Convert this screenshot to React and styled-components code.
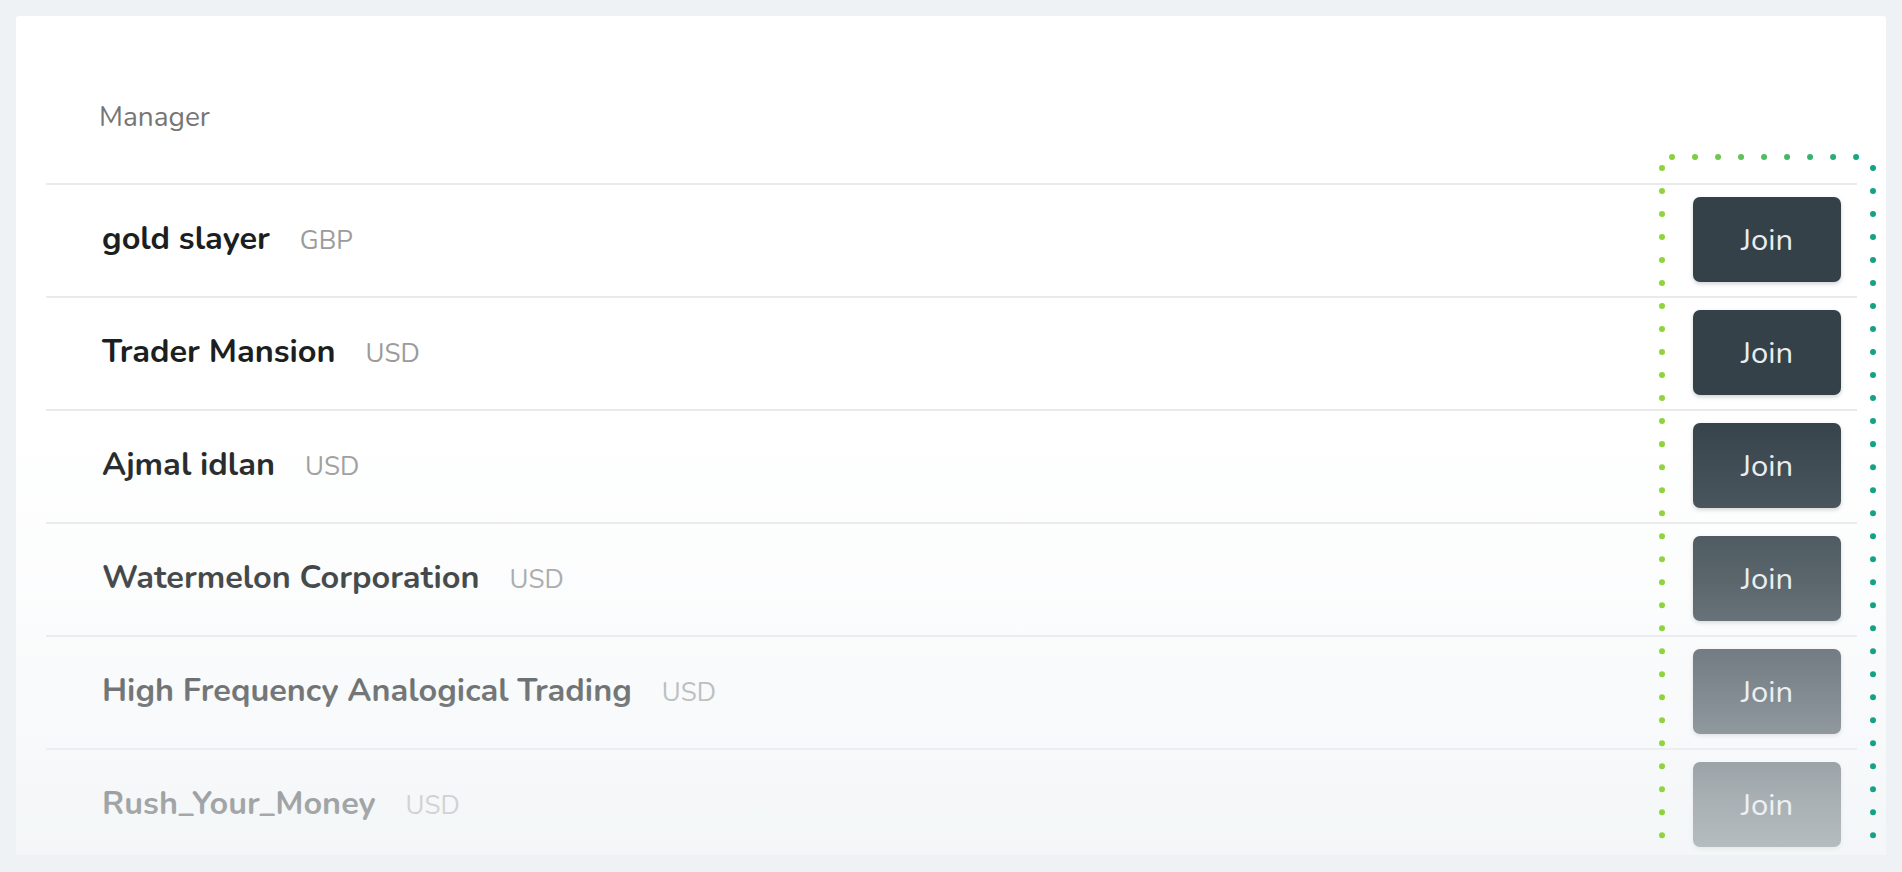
import React from 'react';
import styled, { createGlobalStyle } from 'styled-components';

const GlobalStyle = createGlobalStyle`
  body {
    margin: 0;
    background-color: #eef2f5;
    font-family: "Nunito", "Lato", "Noto Sans", sans-serif;
  }
`;

const Page = styled.div`
  padding: 16px 16px 17px 16px;
`;

const Card = styled.div`
  position: relative;
  height: 839px;
  overflow: hidden;
  background-color: #ffffff;
  border-radius: 3px;
  padding: 0 29px 0 30px;
  box-sizing: border-box;
`;

const Header = styled.div`
  height: 167px;
  box-sizing: border-box;
  padding: 81px 0 0 53px;
  font-size: 28px;
  line-height: 40px;
  color: #767676;
`;

const Row = styled.div`
  display: flex;
  align-items: center;
  justify-content: space-between;
  height: 113px;
  box-sizing: border-box;
  border-top: 2px solid #e8eaeb;
  padding: 0 16px 2px 56px;
`;

const Manager = styled.div`
  display: flex;
  align-items: baseline;
  gap: 30px;
  margin-bottom: 4px;
`;

const Name = styled.span`
  font-size: 32.5px;
  font-weight: 700;
  color: #1c1f21;
`;

const Currency = styled.span`
  font-size: 26px;
  color: #9b9b9b;
`;

const JoinButton = styled.button`
  width: 148px;
  height: 85px;
  border: none;
  border-radius: 7px;
  background-color: #344149;
  color: #e9edef;
  font-family: inherit;
  font-size: 31px;
  font-weight: 400;
  box-shadow: 0 2px 4px rgba(0, 0, 0, 0.18);
  cursor: pointer;
`;

// soft fade that washes out the lower rows of the list
const Fade = styled.div`
  position: absolute;
  inset: 0;
  pointer-events: none;
  background: linear-gradient(
    to bottom,
    rgba(239, 243, 245, 0) 0%,
    rgba(239, 243, 245, 0) 47%,
    rgba(239, 243, 245, 0.2) 67%,
    rgba(239, 243, 245, 0.4) 80%,
    rgba(239, 243, 245, 0.62) 93%,
    rgba(239, 243, 245, 0.7) 100%
  );
`;

const Highlight = styled.svg`
  position: absolute;
  left: 1643px;
  top: 138px;
  width: 218px;
  height: 720px;
  overflow: visible;
  pointer-events: none;
`;

const managers = [
  { name: 'gold slayer', currency: 'GBP' },
  { name: 'Trader Mansion', currency: 'USD' },
  { name: 'Ajmal idlan', currency: 'USD' },
  { name: 'Watermelon Corporation', currency: 'USD' },
  { name: 'High Frequency Analogical Trading', currency: 'USD' },
  { name: 'Rush_Your_Money', currency: 'USD' },
];

const DottedFrame = () => (
  <Highlight viewBox="0 0 218 720">
    <defs>
      <linearGradient id="frameGreen" gradientUnits="userSpaceOnUse" x1="3" y1="0" x2="214" y2="0">
        <stop offset="0" stopColor="#8fd43a" />
        <stop offset="1" stopColor="#12a386" />
      </linearGradient>
    </defs>
    <g fill="none" stroke="url(#frameGreen)" strokeWidth="6" strokeLinecap="round" strokeDasharray="0.01 23">
      <path d="M13 3 H204" />
      <path d="M3 14 V720" />
      <path d="M214 14 V720" />
    </g>
  </Highlight>
);

const App = () => {
  return (
    <Page>
      <GlobalStyle />
      <Card>
        <Header>Manager</Header>
        {managers.map((m) => (
          <Row key={m.name}>
            <Manager>
              <Name>{m.name}</Name>
              <Currency>{m.currency}</Currency>
            </Manager>
            <JoinButton>Join</JoinButton>
          </Row>
        ))}
        <Fade />
        <DottedFrame />
      </Card>
    </Page>
  );
};

export default App;
